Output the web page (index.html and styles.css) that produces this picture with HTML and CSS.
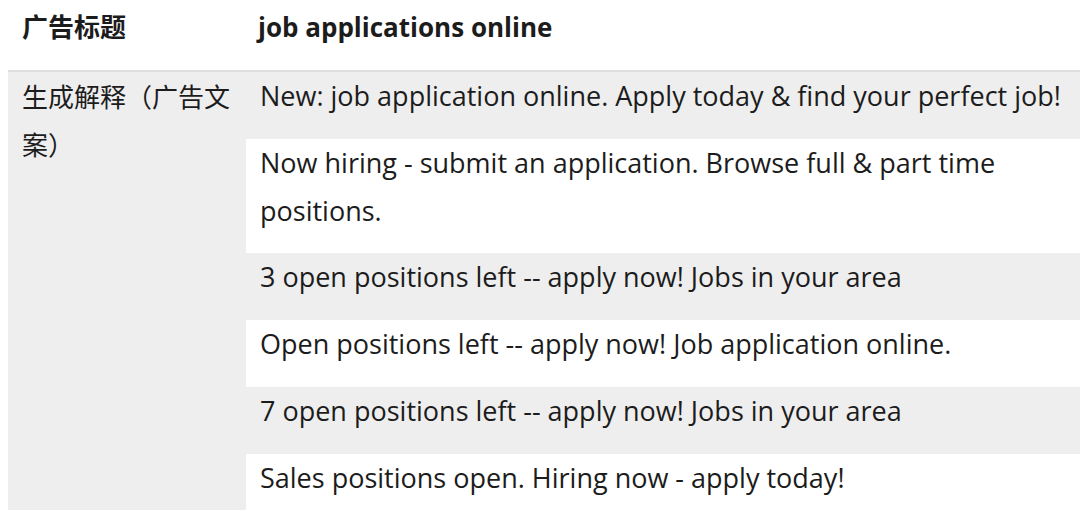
FILE: index.html
```html
<!DOCTYPE html>
<html lang="zh">
<head>
<meta charset="utf-8">
<link rel="stylesheet" href="styles.css">
</head>
<body>
<div class="table">
  <div class="head head-label">广告标题</div>
  <div class="head head-value">job applications online</div>
  <div class="label">生成解释（广告文案）</div>
  <div class="row odd">New: job application online. Apply today &amp; find your perfect job!</div>
  <div class="row even tall">Now hiring - submit an application. Browse full &amp; part time positions.</div>
  <div class="row odd">3 open positions left -- apply now! Jobs in your area</div>
  <div class="row even">Open positions left -- apply now! Job application online.</div>
  <div class="row odd">7 open positions left -- apply now! Jobs in your area</div>
  <div class="row even">Sales positions open. Hiring now - apply today!</div>
</div>
</body>
</html>
```

FILE: styles.css
```css
html, body {
  margin: 0;
  padding: 0;
  background: #ffffff;
}
body {
  font-family: "Open Sans", "Noto Sans CJK SC", sans-serif;
  font-size: 26px;
  line-height: 48px;
  color: #1c1c1c;
  overflow: hidden;
}
.table {
  display: grid;
  grid-template-columns: 238px 1fr;
  margin-left: 8px;
  width: 1072px;
}
.head {
  padding: 3px 0 19px;
  border-bottom: 2px solid #dedede;
  font-weight: 700;
}
.head-label {
  padding-left: 14px;
}
.head-value {
  padding-left: 12px;
}
.label {
  grid-row: span 6;
  background: #efeeef;
  padding: 1px 10px 0 14px;
}
.row {
  font-size: 27px;
  padding: 0 6px 19px 14px;
}
.tall {
  padding-bottom: 18px;
}
.odd {
  background: #eeeeee;
}
.even {
  background: #ffffff;
}
```
